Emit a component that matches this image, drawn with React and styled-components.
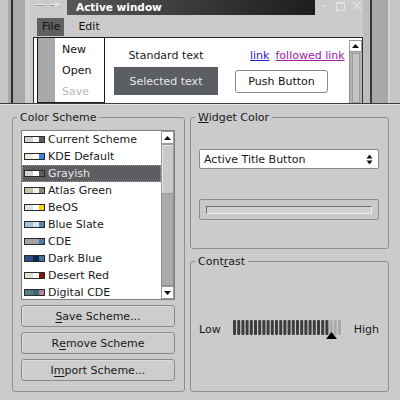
import styled, { createGlobalStyle } from 'styled-components'

const GlobalStyle = createGlobalStyle`
  html, body {
    margin: 0;
    padding: 0;
    background: #cbcbcb;
  }
  body {
    font-family: "DejaVu Sans", Verdana, sans-serif;
    font-size: 11px;
    color: #1a1a1a;
  }
  * { box-sizing: border-box; }
`

const schemes = [
  { name: 'Current Scheme', c: ['#d2d2d2', '#ffffff', '#5a5b5f'] },
  { name: 'KDE Default', c: ['#efebe2', '#ffffff', '#3a86e2'] },
  { name: 'Grayish', c: ['#d4d4d4', '#ffffff', '#5d5e62'], selected: true },
  { name: 'Atlas Green', c: ['#c3c5a8', '#f4f4ee', '#7d8e69'] },
  { name: 'BeOS', c: ['#e3e3e3', '#ffffff', '#ffd200'] },
  { name: 'Blue Slate', c: ['#a9c0d3', '#d5e1ec', '#5a84a5'] },
  { name: 'CDE', c: ['#a4a4a4', '#a4a4a4', '#4e7ea6'] },
  { name: 'Dark Blue', c: ['#2f4f7f', '#10254a', '#4b70a5'] },
  { name: 'Desert Red', c: ['#e3ded3', '#ffffff', '#8b1010'] },
  { name: 'Digital CDE', c: ['#4e8083', '#3a696b', '#b77fa6'] },
]

const App = () => {
  return (
    <>
      <GlobalStyle />
      <Page>
        <Preview>
          <Backdrop>
            <BehindWindow>
              <ActiveWindow>
                <TitleBar>
                  <TitleButtons $w={37}>
                    <svg width="37" height="15">
                      <path d="M6 5.5h9" stroke="#9c9c9c" strokeWidth="1" />
                      <path d="M6 4.5h9" stroke="#ececec" strokeWidth="1" />
                      <path d="M20 4.5h5M25 2.5v4M25.5 3.5h3v2h-3M28.5 4.5h2" stroke="#ececec" strokeWidth="1" fill="none" />
                      <path d="M20 5.5h5M29 6.5h1" stroke="#9c9c9c" strokeWidth="1" />
                    </svg>
                  </TitleButtons>
                  <Caption>Active window</Caption>
                  <TitleButtons $w={48}>
                    <svg width="48" height="15">
                      <rect x="8" y="5" width="2" height="2" fill="#e4e4e4" />
                      <rect x="21.5" y="2.5" width="8" height="8" fill="none" stroke="#e2e2e2" />
                      <path d="M22 3.5h7" stroke="#e2e2e2" />
                      <path d="M38 1.5l8 8M46 1.5l-8 8" stroke="#e2e2e2" strokeWidth="1.1" />
                    </svg>
                  </TitleButtons>
                </TitleBar>
                <MenuBar>
                  <MenuTitle $open>File</MenuTitle>
                  <MenuTitle>Edit</MenuTitle>
                </MenuBar>
                <Content>
                  <ContentBody>
                    <Centered>Standard text</Centered>
                    <Links>
                      <Link>link</Link>
                      <Link $visited>followed link</Link>
                    </Links>
                    <SelectedText>Selected text</SelectedText>
                    <PushButton>Push Button</PushButton>
                  </ContentBody>
                  <WinScroll>
                    <ArrowButton $h={12}>
                      <svg width="7" height="4"><path d="M0 4L3.5 0L7 4Z" fill="#111" /></svg>
                    </ArrowButton>
                    <WinTrack><WinGroove /></WinTrack>
                  </WinScroll>
                  <PopupMenu>
                    <PopupItem>New</PopupItem>
                    <PopupItem>Open</PopupItem>
                    <PopupItem $disabled>Save</PopupItem>
                  </PopupMenu>
                </Content>
              </ActiveWindow>
            </BehindWindow>
          </Backdrop>
        </Preview>

        <Main>
          <Group>
            <Legend>Color Scheme</Legend>
            <SchemeList>
              <Items>
                {schemes.map((s) => (
                  <Item key={s.name} $selected={s.selected}>
                    <Swatch>
                      <SwatchPart $c={s.c[0]} $w={8} />
                      <SwatchPart $c={s.c[1]} $w={6} />
                      <SwatchPart $c={s.c[2]} $w={5} />
                    </Swatch>
                    {s.name}
                  </Item>
                ))}
              </Items>
              <ListScroll>
                <ArrowButton $h={13}>
                  <svg width="7" height="4"><path d="M0 4L3.5 0L7 4Z" fill="#111" /></svg>
                </ArrowButton>
                <Thumb />
                <Track />
                <ArrowButton $h={13}>
                  <svg width="7" height="4"><path d="M0 0L3.5 4L7 0Z" fill="#111" /></svg>
                </ArrowButton>
              </ListScroll>
            </SchemeList>
            <Buttons>
              <Button><u>S</u>ave Scheme...</Button>
              <Button>R<u>e</u>move Scheme</Button>
              <Button>I<u>m</u>port Scheme...</Button>
            </Buttons>
          </Group>

          <RightColumn>
            <Group $grow={138}>
              <Legend><u>W</u>idget Color</Legend>
              <Combo>
                Active Title Button
                <svg width="7" height="11">
                  <path d="M0.5 4.5L3.5 0.5L6.5 4.5Z" fill="#111" />
                  <path d="M0.5 6.5L3.5 10.5L6.5 6.5Z" fill="#111" />
                </svg>
              </Combo>
              <ColorButton>
                <ColorWell />
              </ColorButton>
            </Group>
            <Group $fill>
              <Legend>Cont<u>r</u>ast</Legend>
              <SliderRow>
                <span>Low</span>
                <svg width="110" height="21">
                  {Array.from({ length: 26 }).map((_, i) => (
                    <rect
                      key={i}
                      x={i * 4.2}
                      y="1"
                      width="3"
                      height="15"
                      rx="1"
                      fill={i < 23 ? '#3e3e3e' : '#a9a9a9'}
                    />
                  ))}
                  <path d="M93 20L98.5 13L104 20Z" fill="#000" />
                </svg>
                <span>High</span>
              </SliderRow>
            </Group>
          </RightColumn>
        </Main>
      </Page>
    </>
  )
}
export default App

const Page = styled.div`
  width: 400px;
  height: 400px;
  overflow: hidden;
  display: flex;
  flex-direction: column;
  background: #cbcbcb;
`

const Preview = styled.div`
  height: 104px;
  flex-shrink: 0;
  display: flex;
  overflow: hidden;
  background: #c6c6c6;
  padding: 0 10px 0 8px;
  border-bottom: 1px solid #3c3c3c;
`

const Backdrop = styled.div`
  flex: 1;
  display: flex;
  background: #a8a8a8;
  padding: 0 16px 0 3px;
  border-right: 2px solid #d4d4d4;
`

const BehindWindow = styled.div`
  flex: 1;
  display: flex;
  background: #aaaaaa;
  border-left: 2px solid #2e2e2e;
  border-right: 2px solid #3a3a3a;
  padding-left: 12px;
`

const ActiveWindow = styled.div`
  flex: 1;
  min-width: 0;
  display: flex;
  flex-direction: column;
  background: #cbcbcb;
  border-left: 5px solid #d0d0d0;
  border-right: 7px solid #bdbdbd;
`

const TitleBar = styled.div`
  height: 15px;
  flex-shrink: 0;
  display: flex;
`

const TitleButtons = styled.div`
  width: ${(p) => p.$w}px;
  flex-shrink: 0;
  display: flex;
  svg { display: block; }
`

const Caption = styled.div`
  flex: 1;
  background: linear-gradient(to right, #575757, #1d1d1d);
  color: #ffffff;
  font-weight: bold;
  font-size: 10.5px;
  line-height: 15px;
  padding-left: 9px;
  white-space: nowrap;
`

const MenuBar = styled.div`
  height: 22px;
  flex-shrink: 0;
  display: flex;
  gap: 9px;
  padding: 3px 0 0 7px;
`

const MenuTitle = styled.div`
  height: 18px;
  line-height: 18px;
  padding: 0 4px 0 5px;
  color: #111;
  background: ${(p) => (p.$open ? '#606060' : 'transparent')};
`

const Content = styled.div`
  flex: 1;
  position: relative;
  display: flex;
  margin-left: 3px;
  background: #ffffff;
  border-top: 1px solid #2a2a2a;
  border-left: 1px solid #2a2a2a;
`

const ContentBody = styled.div`
  flex: 1;
  display: grid;
  grid-template-columns: 104px auto;
  grid-auto-rows: min-content;
  column-gap: 17px;
  row-gap: 4px;
  align-items: center;
  padding: 11px 0 0 80px;
  white-space: nowrap;
`

const Centered = styled.div`
  text-align: center;
  line-height: 14px;
`

const Links = styled.div`
  display: flex;
  gap: 6px;
  padding-left: 15px;
  line-height: 14px;
`

const Link = styled.span`
  color: ${(p) => (p.$visited ? '#a021a8' : '#2020e0')};
  text-decoration: underline;
`

const SelectedText = styled.div`
  height: 28px;
  display: flex;
  align-items: center;
  justify-content: center;
  background: #5b5e63;
  color: #e8e8e8;
`

const PushButton = styled.div`
  width: 93px;
  height: 23px;
  display: flex;
  align-items: center;
  justify-content: center;
  background: #ffffff;
  border: 1px solid #8a8a8a;
  border-radius: 3px;
  color: #111;
`

const WinScroll = styled.div`
  width: 14px;
  flex-shrink: 0;
  display: flex;
  flex-direction: column;
  padding-top: 2px;
  border-right: 1px solid #333;
  background: #ffffff;
`

const WinTrack = styled.div`
  flex: 1;
  display: flex;
  background: #b3b3b3;
  border-left: 1px solid #8f8f8f;
  padding: 1px 2px 0 2px;
`

const WinGroove = styled.div`
  flex: 1;
  background: #c4c4c4;
  border: 1px solid #9a9a9a;
`

const ArrowButton = styled.div`
  height: ${(p) => p.$h}px;
  flex-shrink: 0;
  display: flex;
  align-items: center;
  justify-content: center;
  background: #ffffff;
  border: 1px solid #9a9a9a;
  svg { display: block; }
`

const PopupMenu = styled.div`
  position: absolute;
  left: 3px;
  top: -1px;
  width: 68px;
  height: 66px;
  padding-top: 1px;
  border: 1px solid #1a1a1a;
  background: linear-gradient(to right, #a9a9a9 17px, #ffffff 17px);
`

const PopupItem = styled.div`
  height: 21px;
  line-height: 21px;
  padding-left: 24px;
  color: ${(p) => (p.$disabled ? '#b9b9b9' : '#111')};
`

const Main = styled.div`
  flex: 1;
  display: grid;
  grid-template-columns: 173px 199px;
  column-gap: 5px;
  padding: 6px 0 8px 12px;
  border-top: 1px solid #e2e2e2;
`

const Group = styled.fieldset`
  margin: 0;
  min-width: 0;
  display: flex;
  flex-direction: column;
  border: 1px solid #8e8e8e;
  border-radius: 3px;
  padding: 6px 9px 8px 8px;
  ${(p) => (p.$grow ? `height: ${p.$grow}px; flex-shrink: 0;` : '')}
  ${(p) => (p.$fill ? 'flex: 1;' : '')}
`

const Legend = styled.legend`
  margin-left: -4px;
  padding: 0 3px;
  line-height: 13px;
  color: #1a1a1a;
`

const SchemeList = styled.div`
  height: 170px;
  flex-shrink: 0;
  display: flex;
  border: 1px solid #808080;
  background: #ffffff;
`

const Items = styled.div`
  flex: 1;
  min-width: 0;
  overflow: hidden;
`

const Item = styled.div`
  height: 17px;
  display: flex;
  align-items: center;
  gap: 3px;
  padding-left: 2px;
  white-space: nowrap;
  background: ${(p) => (p.$selected ? '#5d5e62' : 'transparent')};
  color: ${(p) => (p.$selected ? '#e6e6e6' : '#1a1a1a')};
  outline: ${(p) => (p.$selected ? '1px dotted #a0a0a0' : 'none')};
  outline-offset: -1px;
`

const Swatch = styled.div`
  width: 21px;
  height: 7px;
  flex-shrink: 0;
  display: flex;
  border: 1px solid #2a2a2a;
`

const SwatchPart = styled.div`
  width: ${(p) => p.$w}px;
  background: ${(p) => p.$c};
`

const ListScroll = styled.div`
  width: 13px;
  flex-shrink: 0;
  display: flex;
  flex-direction: column;
  background: #ffffff;
`

const Thumb = styled.div`
  height: 50px;
  flex-shrink: 0;
  background: #c9c9c9;
  border: 1px solid #9a9a9a;
  box-shadow: inset 1px 1px 0 #e2e2e2;
`

const Track = styled.div`
  flex: 1;
  background: #aaaaaa;
  border: 1px solid #8e8e8e;
  border-top: none;
`

const Buttons = styled.div`
  display: flex;
  flex-direction: column;
  gap: 5px;
  margin-top: 5px;
`

const Button = styled.div`
  height: 22px;
  display: flex;
  align-items: center;
  justify-content: center;
  background: #cdcdcd;
  border: 1px solid #8a8a8a;
  border-radius: 3px;
  box-shadow: inset 1px 1px 0 #dcdcdc;
  color: #1a1a1a;
  u { text-decoration-thickness: 1px; text-underline-offset: 2px; }
`

const RightColumn = styled.div`
  display: flex;
  flex-direction: column;
  gap: 6px;
`

const Combo = styled.div`
  height: 20px;
  flex-shrink: 0;
  margin-top: 19px;
  display: flex;
  align-items: center;
  justify-content: space-between;
  padding: 0 5px 0 4px;
  background: #ffffff;
  border: 1px solid #8a8a8a;
  border-radius: 2px;
  svg { display: block; }
`

const ColorButton = styled.div`
  height: 21px;
  flex-shrink: 0;
  margin-top: 30px;
  display: flex;
  align-items: center;
  padding: 0 6px;
  border: 1px solid #8c8c8c;
  border-radius: 2px;
  background: #c9c9c9;
`

const ColorWell = styled.div`
  flex: 1;
  height: 8px;
  background: #d2d2d2;
  border-top: 1px solid #6c6c6c;
  border-left: 1px solid #6c6c6c;
  border-bottom: 1px solid #f0f0f0;
  border-right: 1px solid #f0f0f0;
`

const SliderRow = styled.div`
  flex: 1;
  display: flex;
  align-items: center;
  gap: 12px;
  padding: 2px 0 0 0;
  color: #1a1a1a;
  svg { display: block; }
`
